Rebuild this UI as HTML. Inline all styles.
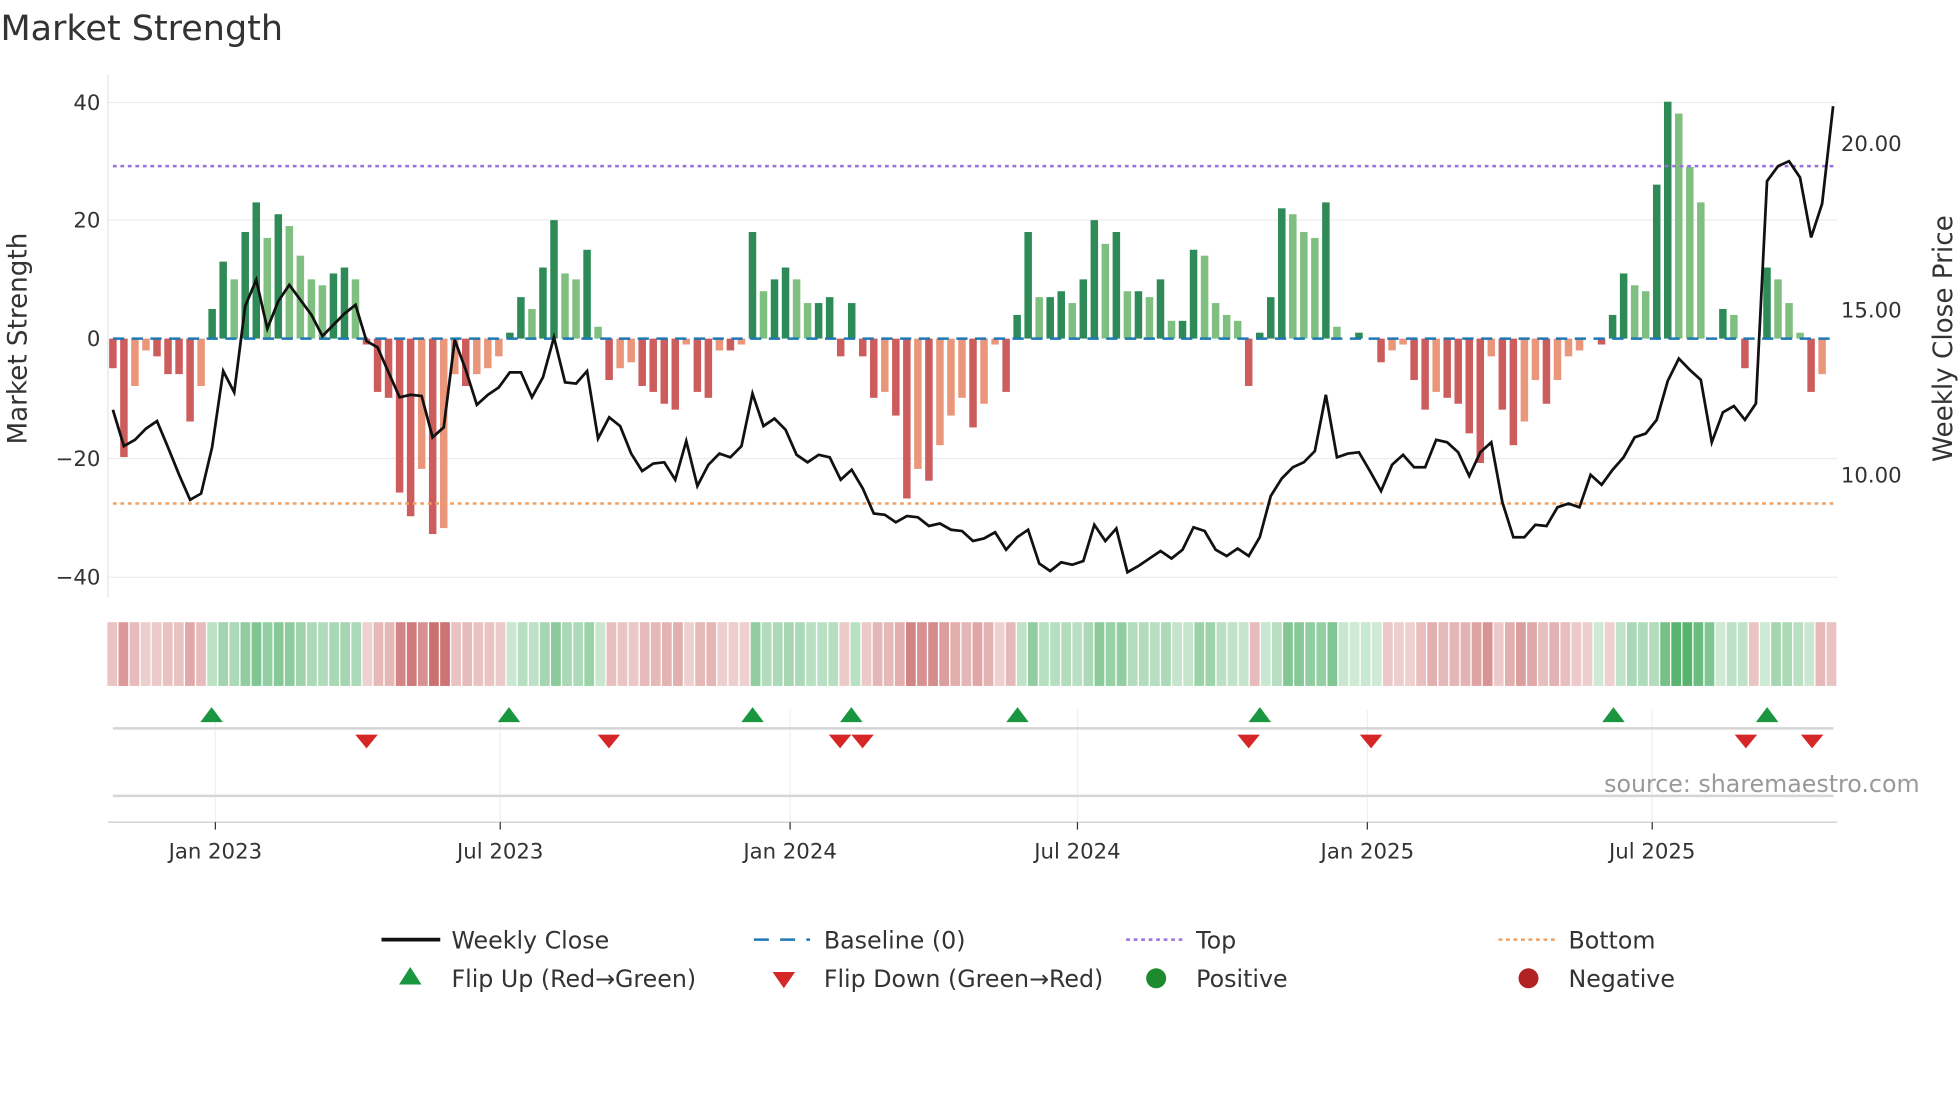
<!DOCTYPE html>
<html><head><meta charset="utf-8"><style>
html,body{margin:0;padding:0;background:#fff;}
svg{display:block;font-family:"DejaVu Sans","Liberation Sans",sans-serif;}
</style></head><body>
<svg id="s" width="1960" height="1102" viewBox="0 0 1568 882" xmlns="http://www.w3.org/2000/svg">
<rect width="1568" height="882" fill="#fff"/>
<text x="0" y="32" font-size="28" fill="#333">Market Strength</text>
<g stroke="#ececec" stroke-width="1">
<line x1="86" y1="82" x2="1470" y2="82"/><line x1="86" y1="176" x2="1470" y2="176"/>
<line x1="86" y1="367" x2="1470" y2="367"/><line x1="86" y1="462" x2="1470" y2="462"/>
</g>
<line x1="86" y1="60" x2="86" y2="478" stroke="#e5e5e5"/>
<g font-size="17" fill="#333" text-anchor="end">
<text x="80" y="88">40</text><text x="80" y="182">20</text><text x="80" y="277">0</text>
<text x="80" y="373">−20</text><text x="80" y="468">−40</text>
</g>
<g font-size="17" fill="#333">
<text x="1473" y="121">20.00</text><text x="1473" y="254">15.00</text><text x="1473" y="386">10.00</text>
</g>
<text transform="translate(21,271) rotate(-90)" font-size="21" fill="#333" text-anchor="middle">Market Strength</text>
<text transform="translate(1562,271) rotate(-90)" font-size="21" fill="#333" text-anchor="middle">Weekly Close Price</text>
<g id="bars"></g>
<line x1="90" y1="271" x2="1467" y2="271" stroke="#1f77b4" stroke-width="2" stroke-dasharray="9,6"/>
<line x1="90" y1="133" x2="1467" y2="133" stroke="#9b6fe0" stroke-width="2" stroke-dasharray="3,3"/>
<line x1="90" y1="403" x2="1467" y2="403" stroke="#f0a060" stroke-width="2" stroke-dasharray="3,3"/>
<polyline id="price" fill="none" stroke="#111" stroke-width="2.2"/>
<g id="strip"></g>
<g stroke="#eef0f2"><line x1="172" y1="568" x2="172" y2="658"/><line x1="400" y1="568" x2="400" y2="658"/><line x1="632" y1="568" x2="632" y2="658"/><line x1="862" y1="568" x2="862" y2="658"/><line x1="1094" y1="568" x2="1094" y2="658"/><line x1="1322" y1="568" x2="1322" y2="658"/></g>
<line x1="90" y1="583" x2="1467" y2="583" stroke="#d5d5d5" stroke-width="2"/>
<line x1="90" y1="637" x2="1467" y2="637" stroke="#d5d5d5" stroke-width="2"/>
<line x1="86" y1="658" x2="1470" y2="658" stroke="#ccc"/>
<g id="marks"></g>
<text x="1536" y="634" font-size="19" fill="#999" text-anchor="end">source: sharemaestro.com</text>
<g stroke="#333"><line x1="172" y1="658" x2="172" y2="664"/><line x1="400" y1="658" x2="400" y2="664"/><line x1="632" y1="658" x2="632" y2="664"/><line x1="862" y1="658" x2="862" y2="664"/><line x1="1094" y1="658" x2="1094" y2="664"/><line x1="1322" y1="658" x2="1322" y2="664"/></g>
<g font-size="17" fill="#333" text-anchor="middle">
<text x="172" y="687">Jan 2023</text><text x="400" y="687">Jul 2023</text><text x="632" y="687">Jan 2024</text>
<text x="862" y="687">Jul 2024</text><text x="1094" y="687">Jan 2025</text><text x="1322" y="687">Jul 2025</text>
</g>
<g font-size="19" fill="#333">
<line x1="305" y1="752" x2="352" y2="752" stroke="#111" stroke-width="3"/><text x="361" y="759">Weekly Close</text>
<line x1="603" y1="752" x2="648" y2="752" stroke="#1f77b4" stroke-width="2" stroke-dasharray="12,9"/><text x="659" y="759">Baseline (0)</text>
<line x1="901" y1="752" x2="946" y2="752" stroke="#9b6fe0" stroke-width="2" stroke-dasharray="3,3"/><text x="957" y="759">Top</text>
<line x1="1199" y1="752" x2="1244" y2="752" stroke="#f0a060" stroke-width="2" stroke-dasharray="3,3"/><text x="1255" y="759">Bottom</text>
<polygon points="328,774 319,788 337,788" fill="#1a9641"/><text x="361" y="790">Flip Up (Red→Green)</text>
<polygon points="618,778 636,778 627,791" fill="#d62728"/><text x="659" y="790">Flip Down (Green→Red)</text>
<circle cx="925" cy="783" r="8" fill="#1e8a2e"/><text x="957" y="790">Positive</text>
<circle cx="1223" cy="783" r="8" fill="#b22222"/><text x="1255" y="790">Negative</text>
</g>
</svg>
<script>
var v=[-5,-20,-8,-2,-3,-6,-6,-14,-8,5,13,10,18,23,17,21,19,14,10,9,11,12,10,-1,-9,-10,-26,-30,-22,-33,-32,-6,-8,-6,-5,-3,1,7,5,12,20,11,10,15,2,-7,-5,-4,-8,-9,-11,-12,-1,-9,-10,-2,-2,-1,18,8,10,12,10,6,6,7,-3,6,-3,-10,-9,-13,-27,-22,-24,-18,-13,-10,-15,-11,-1,-9,4,18,7,7,8,6,10,20,16,18,8,8,7,10,3,3,15,14,6,4,3,-8,1,7,22,21,18,17,23,2,0,1,0,-4,-2,-1,-7,-12,-9,-10,-11,-16,-21,-3,-12,-18,-14,-7,-11,-7,-3,-2,0,-1,4,11,9,8,26,40,38,29,23,0,5,4,-5,0,12,10,6,1,-9,-6];
var p=[328,357,352,343,337,358,380,400,395,358,297,314,245,224,263,241,228,240,252,269,260,251,244,273,278,298,318,316,317,350,342,272,296,324,316,310,298,298,318,302,270,306,307,297,351,334,341,363,377,371,370,384,353,389,372,363,366,357,315,341,335,344,364,370,364,366,384,376,391,411,412,418,413,414,421,419,424,425,433,431,426,440,430,424,451,457,450,452,449,420,433,423,458,453,447,441,447,440,422,425,440,445,439,445,430,397,383,374,370,361,316,366,363,362,377,393,372,364,374,374,352,354,362,381,362,354,402,430,430,420,421,406,403,406,380,388,376,366,350,347,336,305,287,296,304,354,330,325,336,323,145,133,129,142,190,163,85];
var ns="http://www.w3.org/2000/svg",dx=(1458-90)/(v.length-1);
function el(t,a,par){var e=document.createElementNS(ns,t);for(var k in a)e.setAttribute(k,a[k]);document.getElementById(par).appendChild(e);}
var sdx=(1466-90)/(v.length-1);
for(var i=0;i<v.length;i++){var x=90+dx*i,val=v[i],pr=i?v[i-1]:0,c;
 if(val>=0)c=(val>=pr)?"#2e8b57":"#7fbf7f";else c=(val<=pr)?"#cd5c5c":"#e9967a";
 var y0=271,y1=271-val*4.74;
 if(val!=0)el("rect",{x:x-3,y:Math.min(y0,y1),width:6,height:Math.abs(y1-y0),fill:c},"bars");
 var sx=90+sdx*i;
 el("rect",{x:sx-4.4,y:498,width:7.8,height:51,fill:val>=0?"#3aa655":"#c05050","fill-opacity":(0.25+0.6*Math.min(Math.abs(val)/35,1)).toFixed(2)},"strip");}
var pts=[];for(var i=0;i<p.length;i++)pts.push((90+dx*i).toFixed(1)+","+p[i]);
document.getElementById("price").setAttribute("points",pts.join(" "));
[169,407,602,681,814,1008,1291,1414].forEach(function(x){el("polygon",{points:x+",566 "+(x-9)+",578 "+(x+9)+",578",fill:"#1a9641"},"marks");});
[293,487,672,690,999,1097,1397,1450].forEach(function(x){el("polygon",{points:(x-9)+",588 "+(x+9)+",588 "+x+",599",fill:"#d62728"},"marks");});
</script>
</body></html>
